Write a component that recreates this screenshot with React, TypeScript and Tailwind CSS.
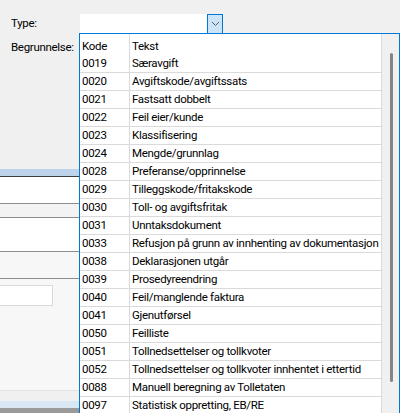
const codes: [string, string][] = [
  ["0019", "Særavgift"],
  ["0020", "Avgiftskode/avgiftssats"],
  ["0021", "Fastsatt dobbelt"],
  ["0022", "Feil eier/kunde"],
  ["0023", "Klassifisering"],
  ["0024", "Mengde/grunnlag"],
  ["0028", "Preferanse/opprinnelse"],
  ["0029", "Tilleggskode/fritakskode"],
  ["0030", "Toll- og avgiftsfritak"],
  ["0031", "Unntaksdokument"],
  ["0033", "Refusjon på grunn av innhenting av dokumentasjon"],
  ["0038", "Deklarasjonen utgår"],
  ["0039", "Prosedyreendring"],
  ["0040", "Feil/manglende faktura"],
  ["0041", "Gjenutførsel"],
  ["0050", "Feilliste"],
  ["0051", "Tollnedsettelser og tollkvoter"],
  ["0052", "Tollnedsettelser og tollkvoter innhentet i ettertid"],
  ["0088", "Manuell beregning av Tolletaten"],
  ["0097", "Statistisk oppretting, EB/RE"],
]

const App = () => {
  return (
    <div className="relative w-[400px] h-[413px] overflow-hidden bg-[#f0f0f0] text-[11.5px] tracking-[-0.3px] text-black font-['Segoe_UI',Roboto,sans-serif]">
      {/* form */}
      <div className="h-[169px] pt-[14px] pl-[11px] flex flex-col gap-[4px]">
        <div className="flex items-center h-[20px]">
          <span className="w-[69px]">Type:</span>
          <div className="w-[127px] h-[20px] bg-white" />
          <div className="w-[16px] h-[20px] flex items-center justify-center bg-[#cce4f7] border border-[#0078d7]">
            <svg width="9" height="6" viewBox="0 0 9 6">
              <path d="M1 1 L4.5 4.5 L8 1" fill="none" stroke="#606060" strokeWidth="1" />
            </svg>
          </div>
        </div>
        <div className="flex items-center h-[20px]">
          <span>Begrunnelse:</span>
        </div>
      </div>

      {/* background grid behind the dropdown */}
      <div className="flex flex-col">
        <div className="h-[7px] bg-[#bdd3eb]" />
        <div className="h-[27px] bg-white border-t border-[#3c3c3c]" />
        <div className="h-[14px] bg-[#f3f3f3] border-t border-[#8c8c8c]" />
        <div className="h-[34px] bg-white border-t border-[#8c8c8c]" />
        <div className="h-[27px] bg-[#f7f7f7] border-t border-[#8c8c8c]" />
        <div className="h-[112px] bg-[#f7f7f7] border-t border-[#8c8c8c] pt-[6px]">
          <div className="w-[53px] h-[21px] bg-white border border-[#d9d9d9] border-l-0" />
        </div>
        <div className="h-[11px] border-t border-[#e3e3e3]" />
        <div className="h-[7px] bg-[#d9e6f4]" />
        <div className="h-[6px] bg-[#9a9a9a]" />
      </div>

      {/* dropdown list */}
      <div className="absolute left-[79px] top-[33px] w-[321px] h-[380px] bg-white border border-b-0 border-[#0078d7] flex">
        <div className="w-[301px] shrink-0 flex flex-col overflow-hidden">
          <div className="flex h-[21px] shrink-0">
            <div className="w-[50px] shrink-0 pl-[2px] pt-[4px] border-r border-[#dadada]">Kode</div>
            <div className="flex-1 pl-[2px] pt-[4px]">Tekst</div>
          </div>
          {codes.map(([kode, tekst]) => (
            <div key={kode} className="flex h-[18px] shrink-0 border-b border-[#dadada]">
              <div className="w-[50px] shrink-0 pl-[2px] flex items-center border-r border-[#dadada]">{kode}</div>
              <div className="flex-1 pl-[2px] flex items-center whitespace-nowrap">{tekst}</div>
            </div>
          ))}
          <div className="flex flex-1">
            <div className="w-[50px] border-r border-[#dadada]" />
          </div>
        </div>
        <div className="flex-1 bg-[#f0f0f0] border-l border-[#dadada] pt-[19px] pl-[8px]">
          <div className="w-[3px] h-[329px] rounded-full bg-[#858585]" />
        </div>
      </div>
    </div>
  )
}

export default App
